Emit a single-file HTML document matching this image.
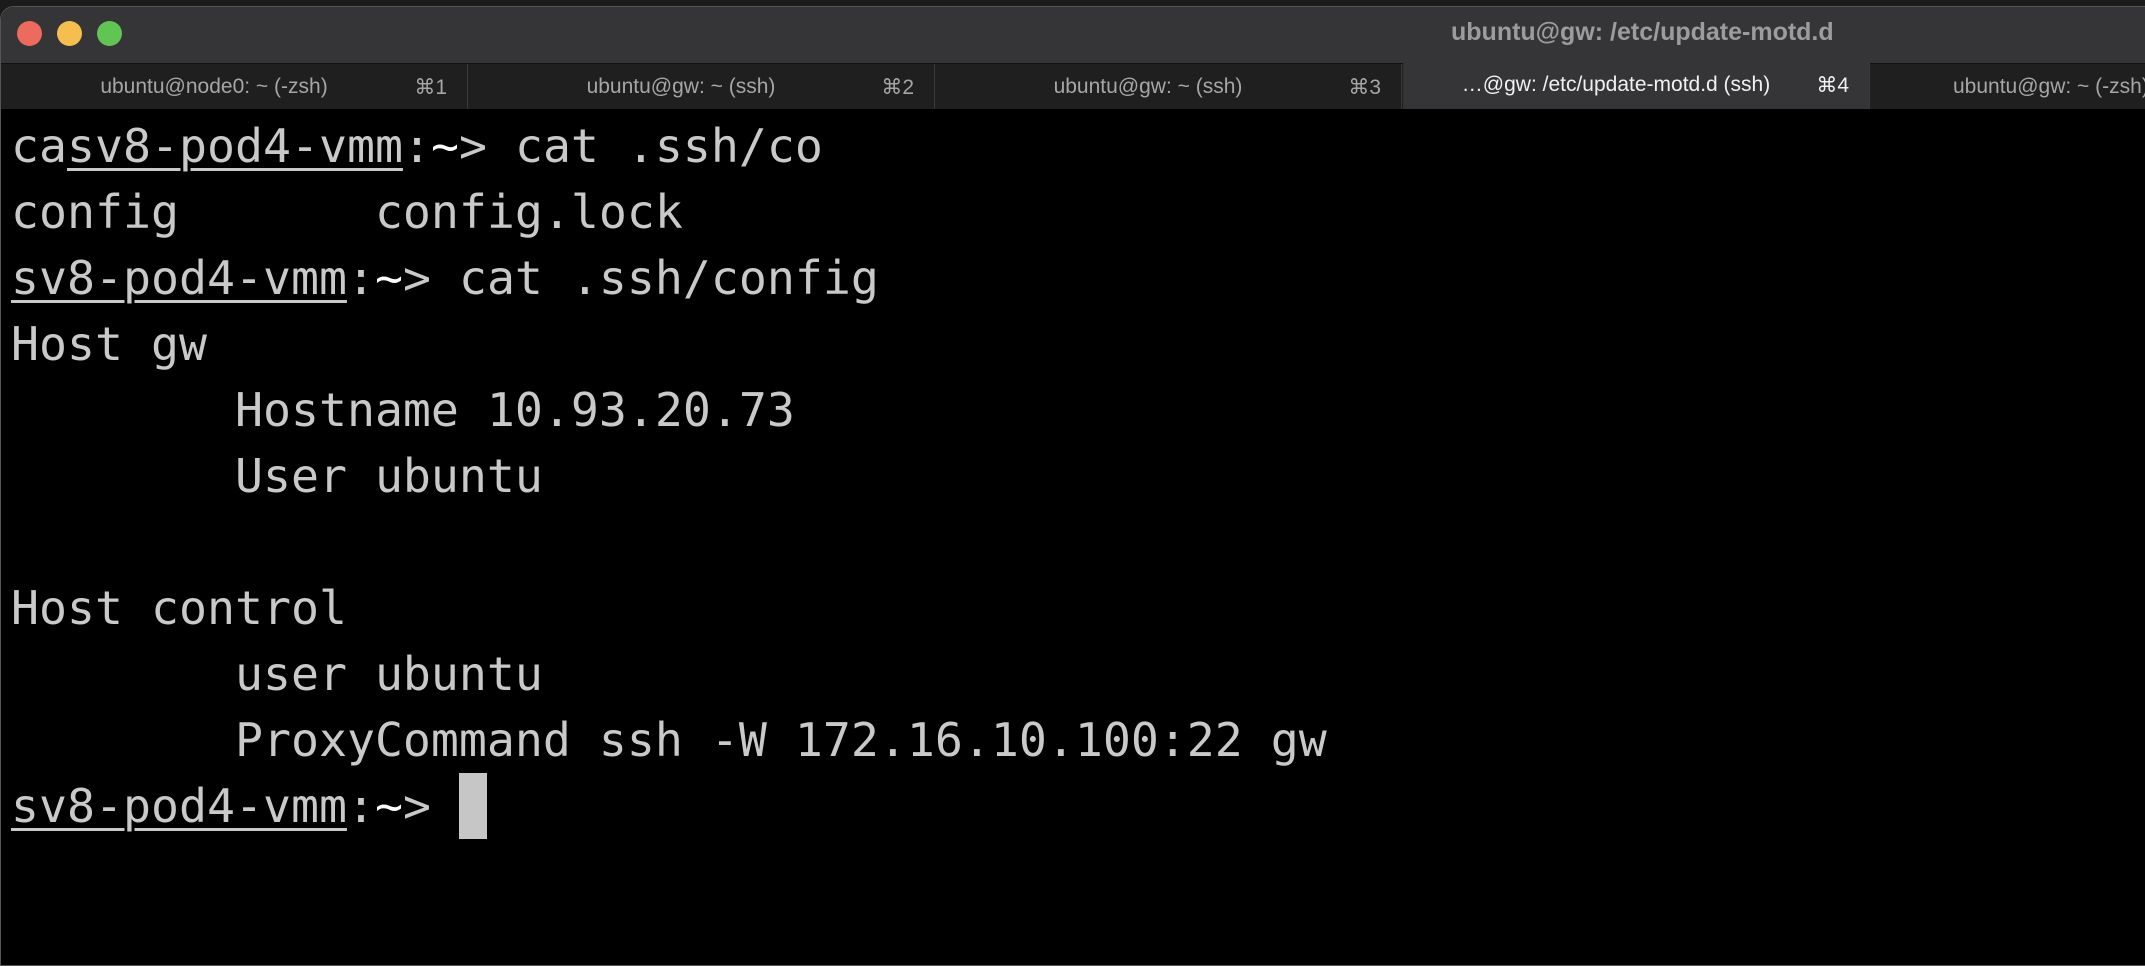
<!DOCTYPE html>
<html><head><style>
html,body{margin:0;padding:0;background:#1b1b1b;width:2145px;height:952px;overflow:hidden}
.win{position:absolute;left:0;top:6px;width:2160px;height:960px;background:#000;border-top-left-radius:14px;border:1px solid #555;box-sizing:border-box;overflow:hidden}
.title{position:absolute;left:0;top:0;right:0;height:56px;background:#353538}
.dot{position:absolute;top:14px;width:25px;height:25px;border-radius:50%}
.ttl{position:absolute;left:1450px;top:11px;font:bold 25px "Liberation Sans",sans-serif;color:#9c9c9e}
.tabs{position:absolute;left:0;top:56px;right:0;height:45px;background:#1f1f20;border-top:1px solid #111}
.tab{position:absolute;top:0;height:45px;width:467px;border-right:1px solid #3a3a3a;font:21px "Liberation Sans",sans-serif;color:#a6a6a8;box-sizing:border-box}
.tab .t{position:absolute;top:11px;left:0;right:40px;text-align:center}
.tab .k{position:absolute;top:11px;right:20px}
.tab.a{background:#353538;color:#f0f0f0;top:-2px;height:47px}
.term{position:absolute;left:10px;top:106px;font-family:"DejaVu Sans Mono","Liberation Mono",monospace;font-size:46.5px;line-height:66px;color:#c9c9c9;white-space:pre}
u{text-decoration:underline;text-decoration-thickness:3px;text-underline-offset:6px}
b{color:#fff;font-weight:normal}
.cur{display:inline-block;width:28px;height:66px;background:#c6c6c6;vertical-align:top}
</style></head><body>
<div class="win">
<div class="title">
<div class="dot" style="left:16px;background:#ed6a5e"></div>
<div class="dot" style="left:56px;background:#f5bf4f"></div>
<div class="dot" style="left:96px;background:#61c554"></div>
<div class="ttl">ubuntu@gw: /etc/update-motd.d</div>
</div>
<div class="tabs">
<div class="tab" style="left:0"><span class="t">ubuntu@node0: ~ (-zsh)</span><span class="k">⌘1</span></div>
<div class="tab" style="left:467px"><span class="t">ubuntu@gw: ~ (ssh)</span><span class="k">⌘2</span></div>
<div class="tab" style="left:934px"><span class="t">ubuntu@gw: ~ (ssh)</span><span class="k">⌘3</span></div>
<div class="tab a" style="left:1402px"><span class="t">…@gw: /etc/update-motd.d (ssh)</span><span class="k">⌘4</span></div>
<div class="tab" style="left:1869px"><span class="t" style="text-align:left;left:83px;right:auto">ubuntu@gw: ~ (-zsh)</span></div>
</div>
<div class="term">ca<u>sv8-pod4-vmm</u>:<b>~</b>&gt; cat .ssh/co
config       config.lock
<u>sv8-pod4-vmm</u>:<b>~</b>&gt; cat .ssh/config
Host gw
        Hostname 10.93.20.73
        User ubuntu

Host control
        user ubuntu
        ProxyCommand ssh -W 172.16.10.100:22 gw
<u>sv8-pod4-vmm</u>:<b>~</b>&gt; <span class="cur"></span></div>
</div>
</body></html>
